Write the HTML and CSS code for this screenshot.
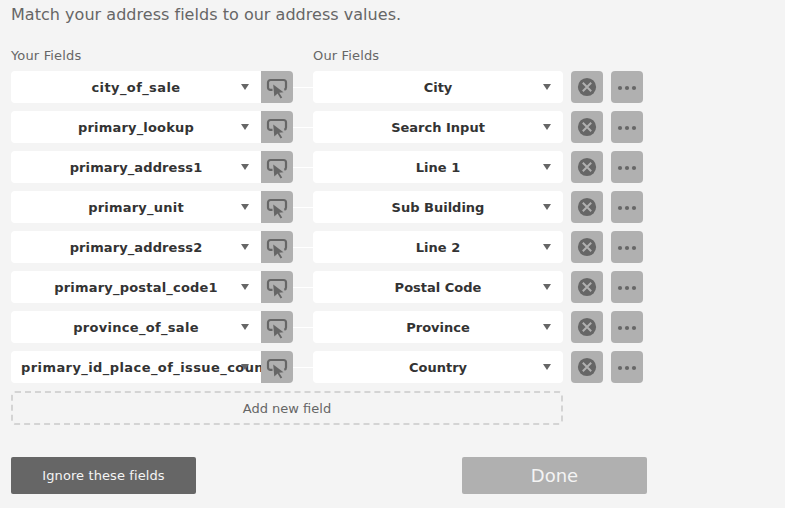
FILE: index.html
```html
<!DOCTYPE html>
<html lang="en">
<head>
<meta charset="utf-8">
<title>Match fields</title>
<link rel="stylesheet" href="styles.css">
</head>
<body>
<h1>Match your address fields to our address values.</h1>
<div class="heads"><span>Your Fields</span><span>Our Fields</span></div>
<main id="rows"></main>
<button class="add">Add new field</button>
<footer class="actions"><button class="ignore">Ignore these fields</button><button class="done">Done</button></footer>
<script src="rows.js"></script>
</body>
</html>
```
FILE: rows.js
```js
// [source field, target field, source label tracking in px]
const fields = [
  ['city_of_sale', 'City', 0.4],
  ['primary_lookup', 'Search Input', 0.18],
  ['primary_address1', 'Line 1', 0.1],
  ['primary_unit', 'Sub Building', 0.22],
  ['primary_address2', 'Line 2', 0.1],
  ['primary_postal_code1', 'Postal Code', 0.2],
  ['province_of_sale', 'Province', 0.3],
  ['primary_id_place_of_issue_coun', 'Country', 0.42]
];
const arrow = '<svg class="arrow" viewBox="0 0 8 6"><path d="M0 0h8L4 6z"/></svg>';
document.getElementById('rows').innerHTML = fields.map(([yours, ours, tracking]) => `
<div class="row">
  <div class="select yours"><span style="letter-spacing:${tracking}px">${yours}</span>${arrow}</div>
  <button class="icon pick"><svg viewBox="0 0 32 32"><path d="M11.500 18.900H9.500a2.500 2.500 0 0 1-2.500-2.500V11.500A2.500 2.500 0 0 1 9.500 9h13A2.500 2.500 0 0 1 25 11.500V16.400a2.500 2.500 0 0 1-1.700 2.400" fill="none" stroke="#666" stroke-width="2.200"/><path d="M12.200 13.500l10.300 7.700-4.300.5 3 4.700-1.600 1-3-4.800-3.300 3z" fill="#666" stroke="#b0b0b0" stroke-width="1" paint-order="stroke"/></svg></button>
  <i class="link"></i>
  <div class="select ours"><span>${ours}</span>${arrow}</div>
  <button class="icon"><svg viewBox="0 0 32 32"><circle cx="16" cy="16" r="9.100" fill="#666"/><path d="M11.800 11.800l8.400 8.400m0-8.400l-8.400 8.400" stroke="#b0b0b0" stroke-width="2"/></svg></button>
  <button class="icon"><svg viewBox="0 0 32 32" fill="#666"><circle cx="9" cy="17" r="2.100"/><circle cx="16" cy="17" r="2.100"/><circle cx="23" cy="17" r="2.100"/></svg></button>
</div>`).join('');
```
FILE: styles.css
```css
* { box-sizing: border-box; }
body { margin: 0; padding: 5px 11px; height: 508px; overflow: hidden; background: #f4f4f4; color: #666; font: 13px Verdana, "DejaVu Sans", sans-serif; }
h1 { margin: 0; font-size: 16px; font-weight: 400; line-height: 20px; letter-spacing: .03px; }
button { border: 0; padding: 0; font: inherit; }
.heads { display: grid; grid-template-columns: 302px 250px; margin-top: 22px; height: 24px; line-height: 17px; letter-spacing: .15px; }
.row { display: flex; height: 32px; margin-bottom: 8px; }
.select { position: relative; width: 250px; height: 32px; display: flex; align-items: center; justify-content: center; background: #fff; border-radius: 4px; color: #333; font-weight: 700; white-space: nowrap; }
.yours { border-radius: 4px 0 0 4px; justify-content: safe center; padding-left: 10px; padding-right: 10px; }
.arrow { position: absolute; right: 12px; top: 13px; width: 8px; height: 6px; fill: #666; }
.icon { position: relative; width: 32px; height: 32px; margin-left: 8px; background: #b0b0b0; border-radius: 4px; }
.icon svg { display: block; width: 32px; height: 32px; }
.pick { margin-left: 0; border-radius: 0 4px 4px 0; }
.link { width: 20px; height: 1px; margin-top: 16px; background: #fff; }
.add { display: block; width: 552px; height: 34px; border: 2px dashed #d4d4d4; border-radius: 4px; background: transparent; color: #666; }
.actions { display: flex; justify-content: space-between; width: 636px; margin-top: 32px; }
.actions button { width: 185px; height: 37px; border-radius: 2px; color: #f4f4f4; }
.actions .ignore { background: #666; letter-spacing: .1px; }
.actions .done { background: #b0b0b0; font-size: 18px; }
```
